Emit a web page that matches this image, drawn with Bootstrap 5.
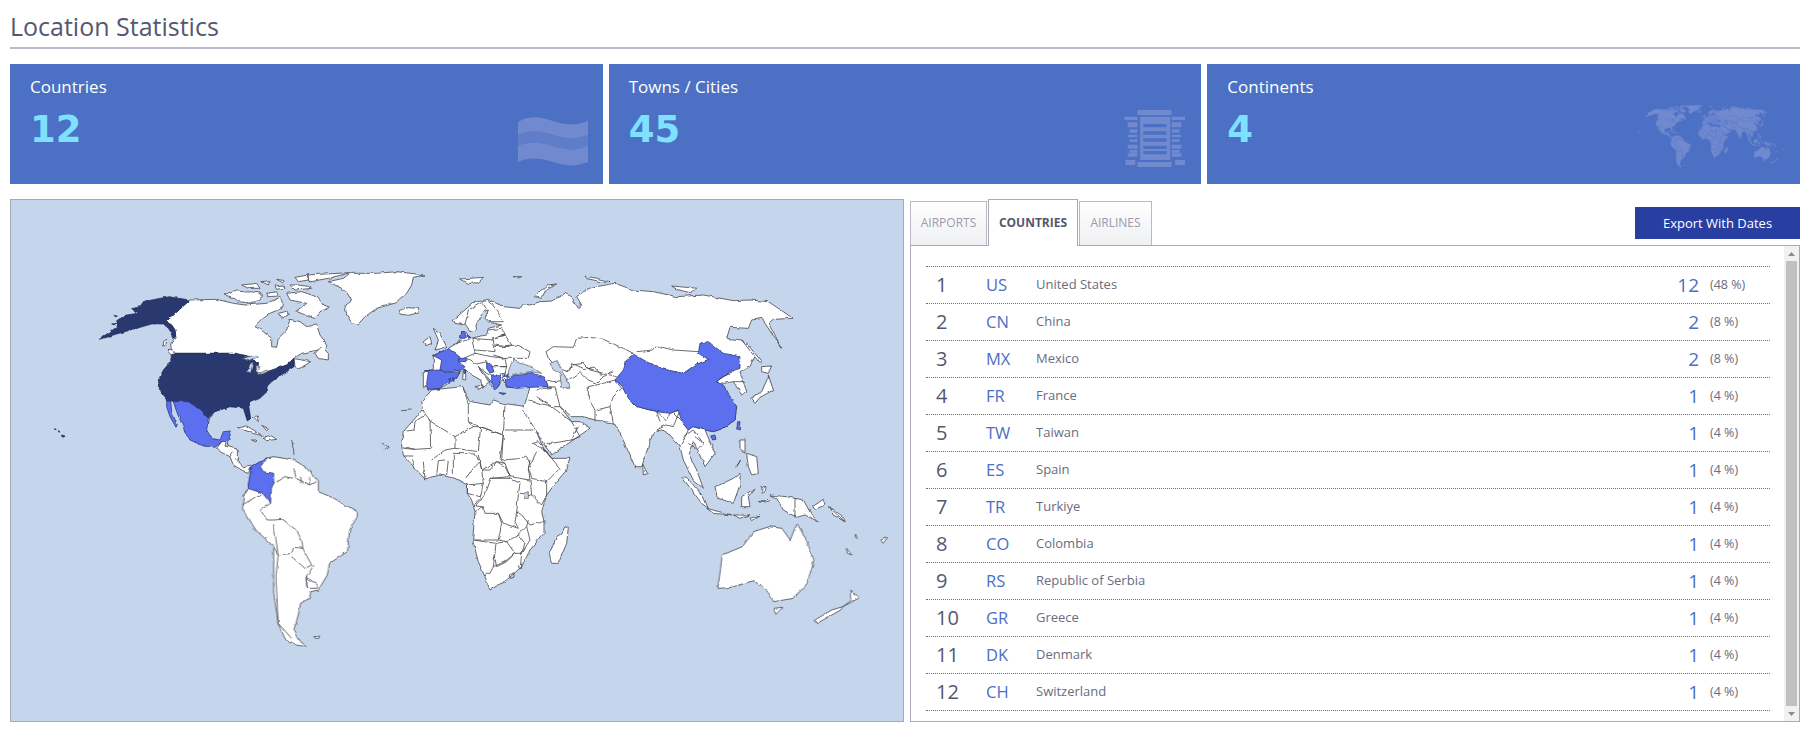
<!DOCTYPE html>
<html lang="en">
<head>
<meta charset="utf-8">
<title>Location Statistics</title>
<link href="https://cdn.jsdelivr.net/npm/bootstrap@5.3.0/dist/css/bootstrap.min.css" rel="stylesheet">
<style>
html,body{height:100%;overflow:hidden}
body{font-family:"Open Sans","Liberation Sans",sans-serif;background:#fff;color:#555770;--land:#fff;--edge:#45454e;--sea:#c5d5ec;--mid:#5b70ef;--dark:#29376f;--midedge:#2f3a78;--darkedge:#1d2850}
.page-wrap{padding:10px 10px 0 10px}
.page-title{font-size:25px;line-height:33px;font-weight:400;color:#555770;margin:0;padding-bottom:4px;border-bottom:2px solid #bdbbc9;height:39px}
.stat-strip{gap:6px;margin-top:15px}
.stat-box{position:relative;height:120px;flex:1 1 0;background:#4b70c4;padding:12px 20px;color:#fff}
.stat-label{font-size:17px;line-height:22px}
.stat-num{font-family:"DejaVu Sans",sans-serif;font-weight:700;font-size:37px;line-height:46px;color:#80e0ff;margin-top:9px}
.stat-icon{position:absolute;fill:#7089cf}
.stat-icon .alt{fill:#5f7dc9}
.i-flag{left:508px;top:53px;width:70px;height:50px}
.i-bld{left:515px;top:46px;width:61px;height:57px}
.i-world{left:0;top:0;width:100%;height:100%;--land:#7089cf;--edge:#6380cb;--sea:#4b70c4;--mid:#7089cf;--dark:#7089cf;--midedge:#6380cb;--darkedge:#7089cf}
.lower{gap:6px;margin-top:15px;height:523px}
.map-frame{flex:0 0 894px;border:1px solid #a6a8b8;background:#c5d5ec;overflow:hidden}
.map-frame svg{display:block}
.map-main{filter:url(#coast)}
.land{fill:var(--land);stroke:var(--edge);stroke-width:.8;stroke-linejoin:round}
.land path{vector-effect:non-scaling-stroke}
.brd{fill:none;stroke:var(--edge);stroke-width:.8}
.brd path{vector-effect:non-scaling-stroke}
.sea{fill:var(--sea);stroke:var(--edge);stroke-width:.6}
.sea path{vector-effect:non-scaling-stroke}
.hi{fill:var(--mid);stroke:var(--midedge);stroke-width:.8}
.hi path{vector-effect:non-scaling-stroke}
.hd{fill:var(--dark);stroke:var(--darkedge);stroke-width:.7}
.hd path{vector-effect:non-scaling-stroke}
.tab-side{flex:1 1 0;min-width:0;display:flex;flex-direction:column}
.tab-bar{height:46px;position:relative;align-items:flex-end;border:0}
.tab-bar .nav-link{font-size:12px;line-height:16px;text-transform:uppercase;text-align:center;color:#9a9aa8;border:1px solid #b9b9c5;border-bottom:0;border-radius:0;background:linear-gradient(#fff,#eff0f3);height:44px;padding:13px 0;margin:0 1px 0 0;width:77px}
.tab-bar .nav-link:last-of-type{width:73px}
.tab-bar .nav-link.active{font-weight:700;color:#555770;background:#fff;height:47px;width:90px;margin-bottom:-1px;padding:15px 0 0;border-color:#aaa9b5;position:relative;z-index:2}
.btn-export{position:absolute;right:0;top:8px;width:165px;height:32px;background:#283ea0;color:#fff;border:0;border-radius:0;font-size:13px;padding:0;line-height:32px}
.btn-export:hover{background:#283ea0;color:#fff}
.stats-panel{height:477px;border:1px solid #aaa9b5;display:flex;background:#fff}
.stats-list{flex:1 1 0;padding:20px 14px 0 15px}
.stat-row{display:flex;align-items:center;height:37px;border-top:1px dotted #6d6d78}
.stat-row:last-child{height:38px;border-bottom:1px dotted #6d6d78}
.c-rank{width:60px;padding-left:10px;font-size:20px;color:#555770}
.c-code{width:50px;font-size:16.5px;color:#4b70c4}
.c-name{flex:1 1 0;font-size:13px;color:#6a6c80}
.c-count{font-size:19px;color:#4b70c4;text-align:right}
.c-pct{width:60px;margin-left:11px;font-size:12.5px;color:#6a6c80}
.fake-scroll{flex:0 0 15px;background:#f1f1f1;display:flex;flex-direction:column;align-items:center;justify-content:space-between}
.fake-thumb{width:11px;flex:1 1 0;background:#c1c1c1}
.fake-arr{height:15px;flex:0 0 15px;width:15px;display:flex;align-items:center;justify-content:center}
.fake-arr svg{display:block;fill:#8a8a8a}
</style>
</head>
<body>
<div class="page-wrap">
  <h1 class="page-title">Location Statistics</h1>

  <div class="d-flex stat-strip">
    <div class="stat-box">
      <div class="stat-label">Countries</div>
      <div class="stat-num">12</div>
      <svg class="stat-icon i-flag" viewBox="0 0 70 50" preserveAspectRatio="none">
        <path d="M0 5C12 -2 22 0 35 4C48 8 58 9 70 4V18C58 23 48 22 35 18C22 14 12 13 0 18Z"/>
        <path class="alt" d="M0 18C12 13 22 14 35 18C48 22 58 23 70 18V29C58 34 48 33 35 29C22 25 12 24 0 29Z"/>
        <path d="M0 29C12 24 22 25 35 29C48 33 58 34 70 29V45C58 50 48 49 35 45C22 41 12 40 0 45Z"/>
      </svg>
    </div>
    <div class="stat-box">
      <div class="stat-label">Towns / Cities</div>
      <div class="stat-num">45</div>
      <svg class="stat-icon i-bld" viewBox="52 180 136 171" preserveAspectRatio="none">
        <path d="M82 180H158V195H82ZM82 336H158V351H82ZM53 200H82V210H53ZM158 200H188V210H158ZM55 330H77V345H55ZM166 330H188V345H166Z"/>
        <path fill-rule="evenodd" d="M88 200H155V330H88ZM95 222V232H147V222ZM95 244V254H147V244ZM95 265V275H147V265ZM95 287V297H147V287ZM95 303V313H147V303Z"/>
        <path d="M60 217H82V232H60ZM64 238H82V248H64ZM60 254H82V262H60ZM64 268H82V276H64ZM60 284H82V296H60ZM64 300H82V308H64ZM60 310H82V320H60Z"/>
        <path d="M158 217H180V232H158ZM158 238H176V248H158ZM158 254H180V262H158ZM158 268H176V276H158ZM158 284H180V296H158ZM158 300H176V308H158ZM158 310H180V320H158Z"/>
      </svg>
    </div>
    <div class="stat-box">
      <div class="stat-label">Continents</div>
      <div class="stat-num">4</div>
      <svg class="stat-icon i-world" viewBox="0 0 593 120" preserveAspectRatio="none">
        <use href="#world" transform="translate(421.5 -3.7) scale(.175 .165)" />
      </svg>
    </div>
  </div>

  <div class="d-flex lower">
    <div class="map-frame">
      <svg width="892" height="521" viewBox="11 200 892 521" role="img" aria-label="World map">
        <defs>
        <filter id="coast" x="0" y="0" width="100%" height="100%" filterUnits="objectBoundingBox">
          <feTurbulence type="fractalNoise" baseFrequency="0.14" numOctaves="2" seed="4" result="n"/>
          <feDisplacementMap in="SourceGraphic" in2="n" scale="3" xChannelSelector="R" yChannelSelector="G"/>
          <feGaussianBlur stdDeviation="0.2"/>
        </filter>
        <g id="world">
          <g transform="translate(0 190) scale(.33333)">
            <g class="land">
              <path d="M570 330L650 328 700 340 735 345 800 340 840 322 850 345 845 355 810 370 790 385 765 410 790 425 815 445 815 470 830 472 835 445 860 420 870 388 900 395 920 410 950 405 960 435 978 460 975 475 945 482 905 490 882 505 885 530 900 535 932 515 905 510 882 505 860 525 830 540 790 550 770 553 775 520 750 500 735 510 710 490 515 490 512 462 527 440 525 420 515 405 498 395Z"/>
              <path d="M860 310L905 305 950 320 972 345 988 352 960 365 945 385 925 380 905 370 885 365 910 350 920 340 895 335 870 330Z"/>
              <path d="M672 315L700 302 740 306 775 305 790 320 760 340 715 335 700 322Z"/>
              <path d="M725 285L770 280 780 295 745 295ZM785 275L810 272 805 285ZM830 268L855 272 848 278ZM800 310L830 305 835 318 805 320ZM825 288L850 285 855 295 830 298ZM870 285L895 285 930 290 935 295 885 300ZM885 262L925 255 925 270 895 275ZM920 255L1050 248 985 265 930 275ZM835 370L862 362 868 375 845 385Z"/>
              <path d="M1050 250L1130 250 1190 245 1275 255 1240 262 1235 285 1220 310 1195 330 1190 338 1130 355 1095 380 1075 402 1055 398 1040 375 1035 345 1055 330 1035 300 1005 285 985 275 1030 265Z"/>
              <path d="M1195 362L1225 353 1255 355 1255 368 1225 376 1200 372Z"/>
              <path d="M945 490L965 470 985 490 985 510 955 505Z"/>
              <path d="M490 455L500 448 497 468 490 467ZM503 478L520 480 527 500 512 495Z"/>
              <path d="M650 775L665 755 680 750 675 768 715 778 715 815 730 830 755 825 745 850 725 840 700 825 690 800 660 785Z"/>
              <path d="M712 715L740 708 790 738 760 730ZM790 745L815 738 830 748 800 752ZM755 750L770 750 768 756ZM760 680L772 678 775 695ZM785 705L805 718 800 722Z"/>
            </g>
            <g class="brd"><path d="M680 750L685 770M700 785L690 800M715 815L705 805"/><path d="M875 750L880 775 882 795M1145 760L1165 768 1155 778M1200 662L1235 660"/></g>
            <g class="hd">
              <path d="M570 330L505 320 430 335 420 350 395 356 412 370 375 376 350 392 352 410 298 448 350 432 400 418 455 402 490 402 505 415 512 425 518 445 527 440 525 420 515 405 498 395Z"/>
              <path d="M515 490L712 490 750 500 775 520 770 553 800 545 830 535 860 525 882 505 882 530 860 545 835 560 815 575 800 590 803 603 780 625 745 640 752 685 742 693 730 655 690 650 645 665 625 685 600 660 565 635 525 635 500 630 480 605 475 570 490 540 512 515Z"/>
              <path d="M163 717L168 717 168 720ZM175 722L180 725 177 727ZM185 735L195 738 190 745 185 742ZM340 376L355 378 350 381ZM335 402L350 400 345 405Z"/>
            </g>
            <g class="sea">
              <path d="M725 505L770 495 775 502 745 512ZM742 545L750 522 760 515 752 548ZM765 525L780 530 772 550 766 540ZM772 553L800 540 803 545 776 557Z"/>
            </g>
            <g class="hi">
              <path d="M520 635L565 635 600 660 625 685 620 720 635 745 660 750 670 725 695 723 685 750 665 755 645 772 610 768 570 750 555 725 530 665Z"/>
              <path d="M500 630L512 632 515 665 532 705 528 712 510 680 500 650Z"/>
            </g>
          </g>

          <g transform="translate(200 460) scale(.44643 .33333)">
            <g class="land">
              <path d="M150 -6L165 -10 210 0 235 20 265 65 265 95 300 115 352 155 352 170 335 210 330 275 290 310 285 345 265 390 248 395 245 415 225 430 220 465 210 510 225 545 240 560 215 555 190 535 175 490 165 400 165 260 125 210 95 145 100 110 107 85 115 20Z"/>
              <path d="M1160 385L1170 285 1215 260 1240 215 1275 200 1303 205 1322 240 1337 190 1358 240 1375 300 1360 370 1330 415 1285 425 1270 390 1240 362 1190 382Z"/>
              <path d="M1285 445L1305 442 1290 463Z"/>
              <path d="M1458 390L1475 415 1440 440 1460 420ZM1440 440L1435 450 1385 488 1375 482 1415 450Z"/>
              <path d="M255 530L268 528 266 535 256 535ZM1525 240L1540 232 1530 250ZM1448 265L1460 285 1450 280ZM1468 222L1472 235 1468 235ZM1410 140L1440 170 1445 185 1420 165Z"/>
            </g>
            <g class="brd">
              <path d="M95 110L107 88M95 135L125 110 140 100M158 130L135 150 150 180 165 180 185 178 215 210 228 240 230 265M165 195L175 285M175 285L205 280 210 262 230 265 250 315 235 325 205 290M165 260L175 285 170 350 175 490 205 535M237 352L262 370 262 385 240 385ZM255 315L248 330 238 352 240 385M210 25L215 55 245 75 260 65M225 50L228 70M245 50L245 75M165 70L190 50 210 55"/>
            </g>
            <g class="hi"><path d="M150 -6L115 20 107 85 140 100 158 130 160 85 165 70 165 40 142 35 135 20Z"/></g>
          </g>

          <g transform="translate(390 380) scale(.33333)">
            <g class="land">
              <path d="M125 30L170 25 218 20 240 65 300 75 310 60 340 70 410 80 435 145 460 205 485 235 540 235 530 270 500 305 470 345 455 395 462 425 462 460 420 510 395 560 350 600 300 630 285 590 265 545 248 480 255 395 245 360 232 340 232 315 195 295 150 285 105 297 75 265 40 225 35 195 40 155 75 115 100 85 95 65Z"/>
              <path d="M525 440L535 445 530 490 505 550 485 550 478 520 500 470 515 460Z"/>
            </g>
            <g class="brd">
              <path d="M100 90L105 105 75 125 72 150 37 155M218 20L235 70 235 125 250 140 195 170 120 123 105 105M235 125L270 140 340 165 345 75M345 150L430 150M340 165L335 240M120 123L122 205 75 208 38 200M195 170L195 205 165 210 125 240M250 140L272 140 265 215 195 205M272 140L340 165 330 240 345 250 320 245 300 270 275 270 265 225M190 220L255 222 270 245 250 265 230 295M190 220L190 285M165 240L145 242 140 285M175 240L170 285M270 245L275 270 280 310 232 315M275 270L320 245 345 260 360 290 300 295M335 240L400 235 410 230 420 250M345 250L360 290 420 300 415 265 420 240M430 190L470 215 485 235 510 265 470 305 425 295 415 265 440 215M430 190L445 185 480 230M420 300L425 345 455 375 470 345 470 305M300 295L360 295 390 310 385 345 380 395 375 425 385 445 340 430 325 400 285 400 280 380 255 378 280 350 300 295M232 315L232 340 270 350M280 310L270 355 250 378M390 340L425 345M380 395L395 405 420 435 462 425M255 395L280 380M325 400L335 430 325 480 250 480M325 480L350 485 385 465 410 440 415 420M250 480L318 490 310 560 300 580 285 580M318 490L350 485 375 520 350 545 320 560 310 520M385 465L405 490 395 520 375 520M410 440L420 480 395 520 392 555M310 560L345 545 375 520M40 205L75 208M40 228L70 228M65 240L75 265M100 245L105 297"/>
              <path d="M358 585L372 578 372 592 360 595ZM385 555L395 552 395 565 388 565Z"/>
            </g>
            <g class="sea"><path d="M400 340L415 335 415 355 402 355Z"/></g>
          </g>

          <g transform="translate(440 240) scale(.33333)">
            <g class="land">
              <path d="M-50 395L-20 388 -20 347 25 325 50 310 62 295 65 275 77 275 90 295 140 285 145 265 185 255 145 245 135 235 145 210 130 215 110 250 105 270 90 275 75 255 45 250 40 240 100 188 145 178 190 200 240 205 250 192 270 195 300 185 335 183 375 160 395 170 415 205 425 195 410 170 430 155 470 140 525 130 580 150 640 155 710 170 790 165 880 182 930 180 985 185 1030 215 1058 235 1000 238 985 250 1025 325 975 250 968 235 935 240 925 265 870 262 860 295 905 300 945 345 930 380 900 395 920 455 905 465 880 425 850 430 828 425 850 410 880 395 850 410 828 425 890 500 885 540 850 565 820 575 795 570 825 640 795 680 770 625 760 605 745 640 770 690 790 745 760 720 730 660 720 620 690 585 665 570 640 575 605 680 585 680 545 590 525 550 465 540 430 530 395 530 360 500 395 545 420 545 450 565 400 600 335 645 310 610 250 510 255 490 265 460 270 440 200 442 190 420 195 405 175 440 155 440 150 420 112 378 128 402 150 425 128 445 122 420 95 405 75 388 60 385 50 390 60 395 50 415 0 445 -35 448 -40 440 -50 440Z"/>
              <path d="M932 475L965 455 985 410 985 405 1000 450 960 472 945 490ZM965 380L995 378 985 400 965 395ZM905 300L960 370 965 365 920 310Z"/>
              <path d="M900 600L915 600 915 640 900 625ZM920 640L950 650 955 700 935 705 925 680ZM890 680L902 660 888 682Z"/>
              <path d="M725 710L740 712 790 770 805 805 785 790ZM800 805L875 825 820 820ZM828 740L880 715 900 700 900 735 880 790 835 775ZM905 770L945 745 925 770 930 800 905 800ZM880 825L930 825 900 835ZM930 835L960 825 935 842ZM955 782L990 782 985 788ZM965 740L975 740 972 760 967 760Z"/>
              <path d="M990 765L1040 770 1090 780 1115 825 1135 845 1095 825 1070 832 1030 810 1010 775ZM1118 800L1150 778 1155 795 1125 808ZM1165 800L1215 845 1180 825Z"/>
              <path d="M608 672L622 700 610 705ZM283 170L320 135 350 132 320 145 305 175ZM62 117L130 112 115 128 85 130ZM435 108L470 115 510 125 480 125 440 115ZM220 110H245L235 114ZM695 138L770 145 750 158 710 148Z"/>
            </g>
            <g class="brd">
              <path d="M318 335L340 320 400 322 410 295 450 292 490 298 550 325 580 340M530 410L490 400 450 390 430 370 395 375 385 395 355 385 325 355 318 335M590 335L640 330 650 318 700 330 775 335 800 350"/>
              <path d="M385 395L395 370 430 385 465 385 490 410 520 395M385 420L420 395 445 420 470 430 490 410M320 420L340 425 385 420M445 440L445 475 465 510 465 540M445 440L490 430 525 420 545 445 520 470 510 500 470 510M510 500L520 550M548 440L590 500 650 515 680 540 690 520 720 510 700 560 680 555 650 570M700 520L725 545 745 570 730 600 720 620M730 590L760 570 790 610 770 630 745 610M760 560L795 570M765 590L790 610M880 425L915 425M290 450L345 440 360 500 335 500 290 470M265 480L335 500 395 545 420 590 395 600 335 610 320 610M395 600L415 560M270 440L335 440M650 515L660 545M1065 775L1065 832"/>
            </g>
            <g class="sea">
              <path d="M330 370L350 362 375 410 390 445 365 445 360 400 340 390Z"/>
              <path d="M210 380L220 360 240 370 270 378 305 400 270 395 225 402 200 412Z"/>
            </g>
          </g>

          <g transform="translate(420 290) scale(.33333)">
            <g class="land">
              <path d="M40 115L55 125 70 150 80 170 45 180 55 150ZM10 155L30 140 35 160 15 168ZM130 240L137 240 137 270 128 268ZM165 290L190 285 180 297Z"/>
            </g>
            <g class="brd">
              <path d="M110 160L155 145 165 190 130 205M155 145L220 150 225 185 165 180M225 165L250 170 290 165 330 185 325 205 285 205 255 205 220 195M215 145L255 135 275 165 225 170M205 120L245 115 255 135 215 145M215 200L255 205 260 230 215 230M222 230L260 230 255 250 228 255M205 30L230 60 250 95 205 95M135 105L145 60 190 35M190 40L200 60M125 150L105 165M165 190L215 200M140 205L170 222 200 215M175 230L200 250 215 258"/>
            </g>
            <g class="hi">
              <path d="M10 242L60 240 90 248 120 245 110 265 75 280 60 295 25 298 20 285 25 245Z"/>
              <path d="M40 197L85 175 125 205 115 215 135 230 125 240 90 245 60 240 65 210Z"/>
              <path d="M115 205L140 205 140 215 115 215Z"/>
              <path d="M215 258L245 255 235 290 225 300 215 275ZM237 308L258 310 250 314Z"/>
              <path d="M200 215L215 225 222 245 210 250 200 235Z"/>
              <path d="M255 270L285 255 330 248 375 262 385 290 330 292 290 295 260 290ZM250 255L265 250 262 262Z"/>
              <path d="M125 125L137 125 135 145 122 145ZM140 135L150 140 145 145ZM85 268L92 265 90 272ZM98 264L105 263 102 268Z"/>
              <path d="M132 240L137 240 136 250 132 250Z"/>
            </g>
          </g>

          <g transform="translate(440 240) scale(.33333)">
            <g class="hi">
              <path d="M580 342L620 365 660 385 730 400 765 375 805 358 775 340 780 310 805 305 850 340 900 350 900 385 870 395 850 410 828 425 850 435 890 500 885 540 850 565 820 575 795 570 760 560 745 570 725 545 715 510 690 520 650 515 590 500 565 475 548 440 525 420 550 390 560 360Z"/>
              <path d="M812 588L825 585 828 598 818 600ZM893 545L900 545 898 570 890 568Z"/>
            </g>
          </g>
        </g>
        </defs>
        <use href="#world" class="map-main"/>
      </svg>
    </div>

    <div class="tab-side">
      <div class="nav nav-tabs tab-bar">
        <a class="nav-link" href="#">Airports</a>
        <a class="nav-link active" href="#">Countries</a>
        <a class="nav-link" href="#">Airlines</a>
        <button class="btn btn-export" type="button">Export With Dates</button>
      </div>
      <div class="stats-panel">
        <div class="stats-list">
          <div class="stat-row"><div class="c-rank">1</div><div class="c-code">US</div><div class="c-name">United States</div><div class="c-count">12</div><div class="c-pct">(48 %)</div></div>
          <div class="stat-row"><div class="c-rank">2</div><div class="c-code">CN</div><div class="c-name">China</div><div class="c-count">2</div><div class="c-pct">(8 %)</div></div>
          <div class="stat-row"><div class="c-rank">3</div><div class="c-code">MX</div><div class="c-name">Mexico</div><div class="c-count">2</div><div class="c-pct">(8 %)</div></div>
          <div class="stat-row"><div class="c-rank">4</div><div class="c-code">FR</div><div class="c-name">France</div><div class="c-count">1</div><div class="c-pct">(4 %)</div></div>
          <div class="stat-row"><div class="c-rank">5</div><div class="c-code">TW</div><div class="c-name">Taiwan</div><div class="c-count">1</div><div class="c-pct">(4 %)</div></div>
          <div class="stat-row"><div class="c-rank">6</div><div class="c-code">ES</div><div class="c-name">Spain</div><div class="c-count">1</div><div class="c-pct">(4 %)</div></div>
          <div class="stat-row"><div class="c-rank">7</div><div class="c-code">TR</div><div class="c-name">Turkiye</div><div class="c-count">1</div><div class="c-pct">(4 %)</div></div>
          <div class="stat-row"><div class="c-rank">8</div><div class="c-code">CO</div><div class="c-name">Colombia</div><div class="c-count">1</div><div class="c-pct">(4 %)</div></div>
          <div class="stat-row"><div class="c-rank">9</div><div class="c-code">RS</div><div class="c-name">Republic of Serbia</div><div class="c-count">1</div><div class="c-pct">(4 %)</div></div>
          <div class="stat-row"><div class="c-rank">10</div><div class="c-code">GR</div><div class="c-name">Greece</div><div class="c-count">1</div><div class="c-pct">(4 %)</div></div>
          <div class="stat-row"><div class="c-rank">11</div><div class="c-code">DK</div><div class="c-name">Denmark</div><div class="c-count">1</div><div class="c-pct">(4 %)</div></div>
          <div class="stat-row"><div class="c-rank">12</div><div class="c-code">CH</div><div class="c-name">Switzerland</div><div class="c-count">1</div><div class="c-pct">(4 %)</div></div>
        </div>
        <div class="fake-scroll">
          <div class="fake-arr"><svg width="7" height="4" viewBox="0 0 7 4"><path d="M3.5 0L7 4H0Z"/></svg></div>
          <div class="fake-thumb"></div>
          <div class="fake-arr"><svg width="7" height="4" viewBox="0 0 7 4"><path d="M0 0H7L3.5 4Z"/></svg></div>
        </div>
      </div>
    </div>
  </div>
</div>
<script src="https://cdn.jsdelivr.net/npm/bootstrap@5.3.0/dist/js/bootstrap.bundle.min.js"></script>
</body>
</html>
